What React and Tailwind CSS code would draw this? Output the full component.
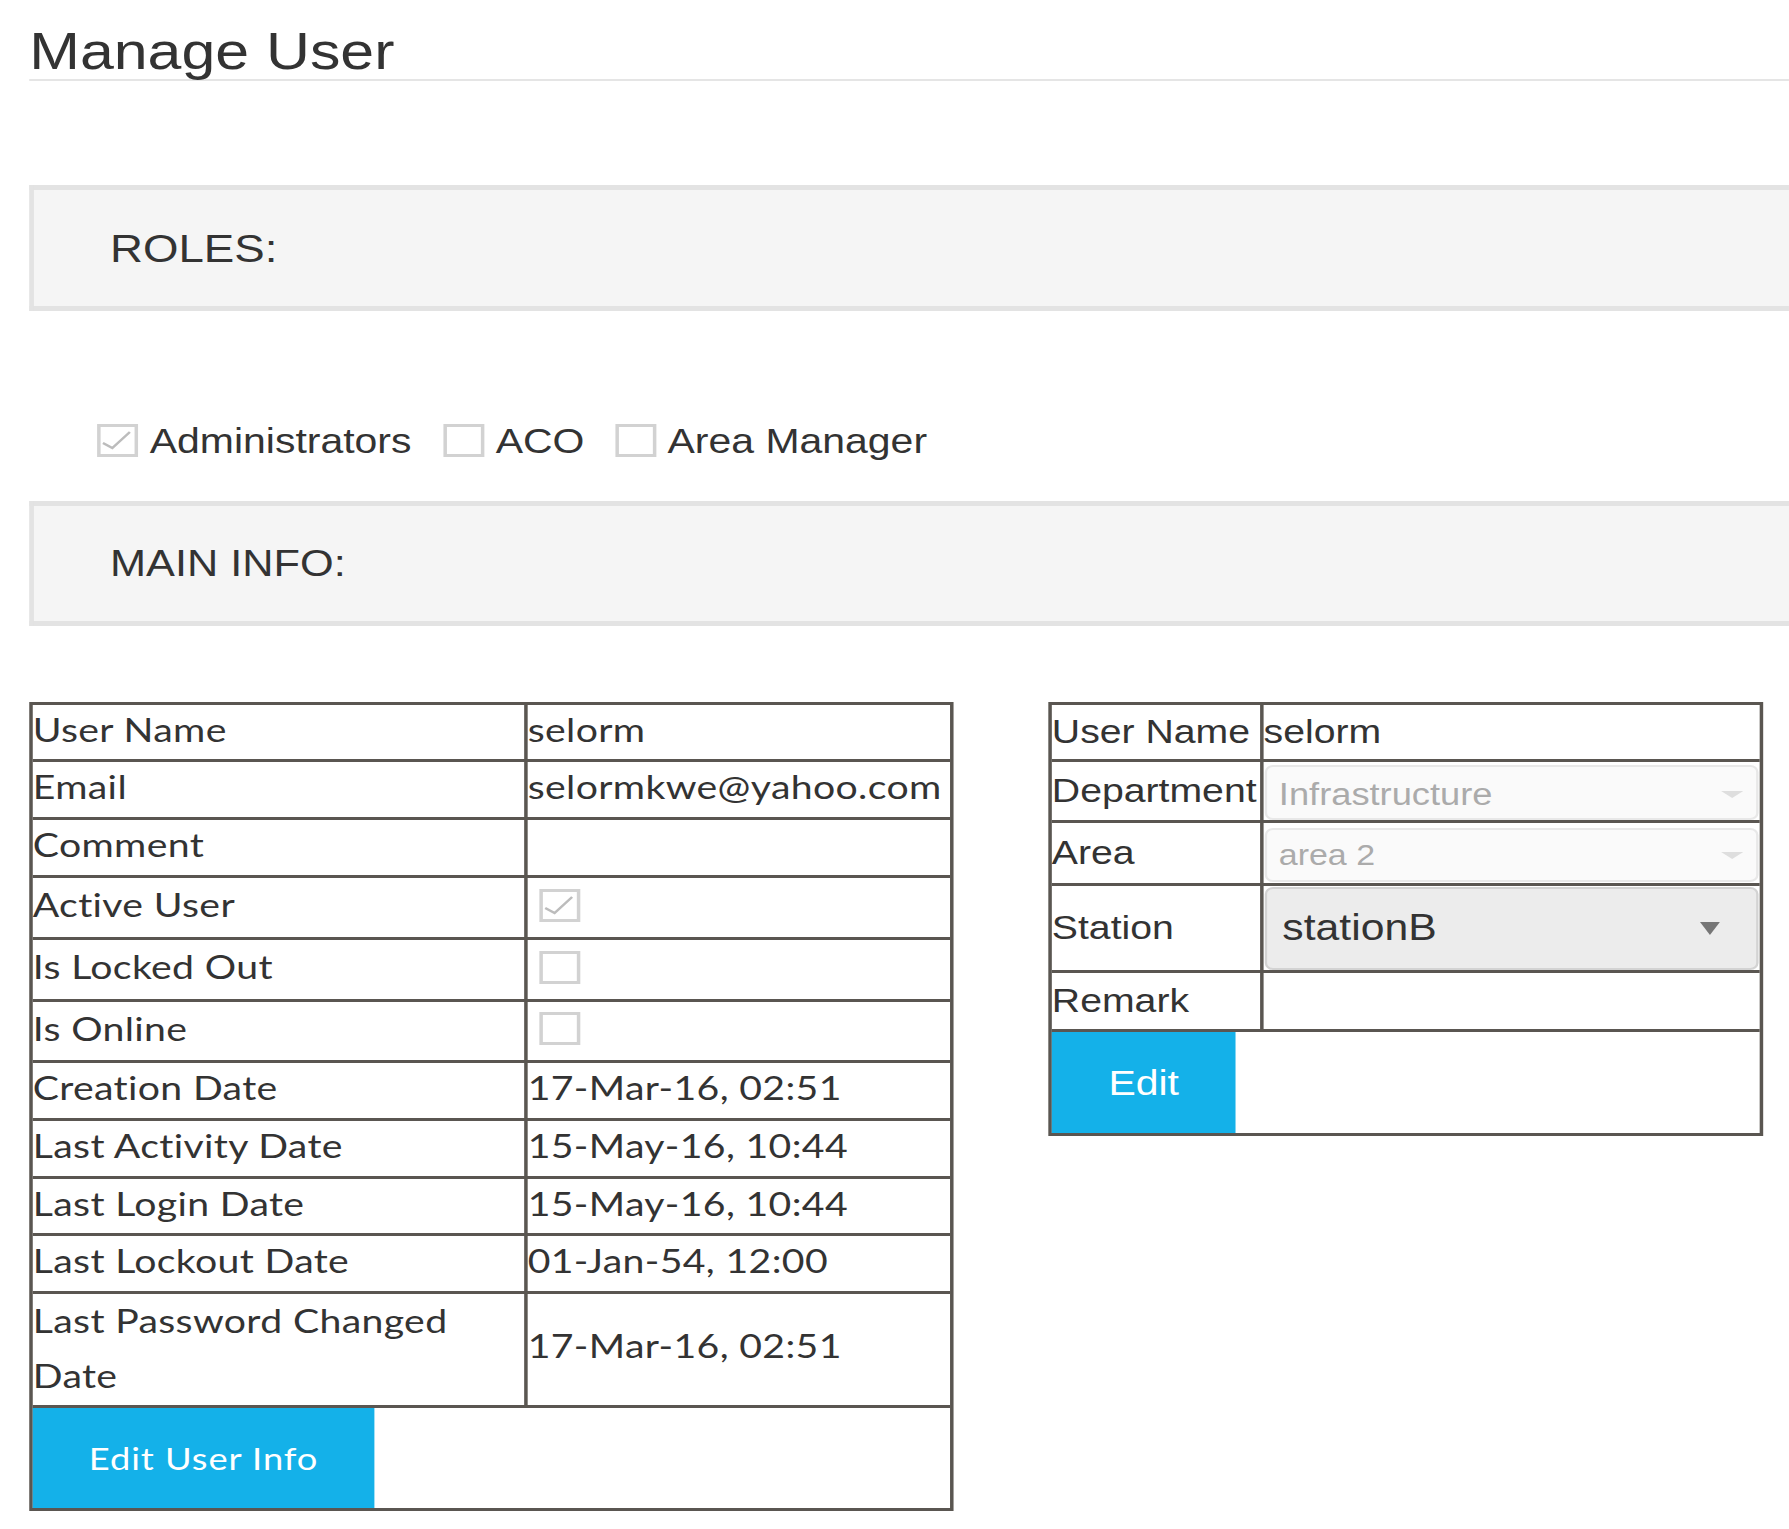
import React from "react";

function Box({ checked, className = "" }) {
  return (
    <span
      className={
        "flex-none w-[35px] h-[33px] border-[3px] border-[#d2d2d2] bg-white flex " +
        className
      }
    >
      {checked && (
        <svg viewBox="0 0 29 27" className="w-full h-full">
          <polyline
            points="2,16 10,21 25,5"
            fill="none"
            stroke="#bcbcbc"
            strokeWidth="2.2"
          />
        </svg>
      )}
    </span>
  );
}

const leftRows = [
  { l: "User Name", v: "selorm", h: "h-[57px]" },
  { l: "Email", v: "selormkwe@yahoo.com", h: "h-[58px]" },
  { l: "Comment", v: "", h: "h-[58px]" },
  { l: "Active User", cb: true, checked: true, h: "h-[62px]" },
  { l: "Is Locked Out", cb: true, h: "h-[62px]" },
  { l: "Is Online", cb: true, h: "h-[61px]" },
  { l: "Creation Date", v: "17-Mar-16, 02:51", h: "h-[58px]" },
  { l: "Last Activity Date", v: "15-May-16, 10:44", h: "h-[58px]" },
  { l: "Last Login Date", v: "15-May-16, 10:44", h: "h-[57px]" },
  { l: "Last Lockout Date", v: "01-Jan-54, 12:00", h: "h-[58px]" },
];

function Arrow({ dark }) {
  return dark ? (
    <svg viewBox="0 0 19 13" className="w-[19px] h-[13px] flex-none">
      <polygon points="1,0 18,0 9.5,13" fill="#767676" />
    </svg>
  ) : (
    <svg viewBox="0 0 19 7" className="w-[19px] h-[7px] flex-none">
      <polygon points="0,0 19,0 9.5,7" fill="#dedede" />
    </svg>
  );
}

export default function App() {
  return (
    <div className="w-[1789px] h-[1529px] overflow-hidden bg-white text-[#333]">
      <div className="w-[1529px] origin-top-left scale-x-[1.17] pl-[25px] pt-[25px] font-['Liberation_Sans',Arial,sans-serif]">
        <h1 className="text-[52px] leading-[52px] font-normal pb-[2px] border-b-2 border-[#e5e5e5]">
          Manage User
        </h1>

        <div className="mt-[104px] h-[126px] bg-[#f5f5f5] border-y-[5px] border-l-[4px] border-r-0 border-[#e3e3e3] flex items-center pl-[65px] text-[39px] leading-none">
          ROLES:
        </div>

        <div className="mt-[113px] h-[33px] flex items-center pl-[58px] text-[35px] leading-none whitespace-nowrap">
          <Box checked />
          <span className="ml-[10px]">Administrators</span>
          <Box className="ml-[27px]" />
          <span className="ml-[10px]">ACO</span>
          <Box className="ml-[26px]" />
          <span className="ml-[10px]">Area Manager</span>
        </div>

        <div className="mt-[44px] h-[125px] bg-[#f5f5f5] border-y-[5px] border-l-[4px] border-r-0 border-[#e3e3e3] flex items-center pl-[65px] text-[37px] leading-none">
          MAIN INFO:
        </div>

        <div className="mt-[76px] flex items-start gap-[81px]">
          {/* Left table */}
          <div className="w-[790px] flex-none border-[3px] border-[#5a5651] font-['Lato',sans-serif] text-[33.5px] tracking-[0.3px] leading-none">
            {leftRows.map((r) => (
              <div
                key={r.l}
                className={"flex border-b-[3px] border-[#5a5651] " + r.h}
              >
                <div className="w-[423px] flex-none border-r-[3px] border-[#5a5651] flex items-center pb-[5px] whitespace-nowrap">
                  {r.l}
                </div>
                <div className="flex-1 flex items-center pb-[5px] whitespace-nowrap">
                  {r.cb ? <Box checked={r.checked} className="ml-[10px]" /> : r.v}
                </div>
              </div>
            ))}
            <div className="flex h-[114px] border-b-[3px] border-[#5a5651]">
              <div className="w-[423px] flex-none border-r-[3px] border-[#5a5651] flex items-center pb-[3px] leading-[55px]">
                <span>
                  Last Password Changed
                  <br />
                  Date
                </span>
              </div>
              <div className="flex-1 flex items-center pb-[8px] whitespace-nowrap">
                17-Mar-16, 02:51
              </div>
            </div>
            <div className="flex h-[100px]">
              <button className="w-[292px] h-full bg-[#14b1e9] text-white text-[31px] tracking-[0.8px] leading-none flex items-center justify-center">
                Edit User Info
              </button>
            </div>
          </div>

          {/* Right table */}
          <div className="w-[611px] flex-none border-[3px] border-[#5a5651] text-[33.5px] leading-none">
            <div className="flex h-[57px] border-b-[3px] border-[#5a5651]">
              <div className="w-[181px] flex-none border-r-[3px] border-[#5a5651] flex items-center whitespace-nowrap">
                User Name
              </div>
              <div className="flex-1 flex items-center">selorm</div>
            </div>
            <div className="flex h-[61px] border-b-[3px] border-[#5a5651]">
              <div className="w-[181px] flex-none border-r-[3px] border-[#5a5651] flex items-center whitespace-nowrap">
                Department
              </div>
              <div className="flex-1 px-[1px]">
                <div className="mt-[3px] h-[55px] rounded-[7px] border-2 border-[#e8e8e8] bg-[#fafafa] flex items-center pl-[10px] pr-[11px] pt-[4px] text-[31px] text-[#ababab]">
                  <span className="flex-1">Infrastructure</span>
                  <Arrow />
                </div>
              </div>
            </div>
            <div className="flex h-[63px] border-b-[3px] border-[#5a5651]">
              <div className="w-[181px] flex-none border-r-[3px] border-[#5a5651] flex items-center">
                Area
              </div>
              <div className="flex-1 px-[1px]">
                <div className="mt-[5px] h-[54px] rounded-[7px] border-2 border-[#e8e8e8] bg-[#fafafa] flex items-center pl-[10px] pr-[11px] text-[29px] text-[#ababab]">
                  <span className="flex-1">area 2</span>
                  <Arrow />
                </div>
              </div>
            </div>
            <div className="flex h-[87px] border-b-[3px] border-[#5a5651]">
              <div className="w-[181px] flex-none border-r-[3px] border-[#5a5651] flex items-center">
                Station
              </div>
              <div className="flex-1 px-[1px]">
                <div className="mt-[1px] h-[83px] rounded-[7px] border-2 border-[#d3d3d3] bg-[#ececec] flex items-center pl-[13px] pr-[30px] text-[36.5px] text-[#333]">
                  <span className="flex-1">stationB</span>
                  <Arrow dark />
                </div>
              </div>
            </div>
            <div className="flex h-[59px] border-b-[3px] border-[#5a5651]">
              <div className="w-[181px] flex-none border-r-[3px] border-[#5a5651] flex items-center">
                Remark
              </div>
              <div className="flex-1" />
            </div>
            <div className="flex h-[101px]">
              <button className="w-[157px] h-full bg-[#14b1e9] text-white text-[35px] leading-none flex items-center justify-center">
                Edit
              </button>
            </div>
          </div>
        </div>
      </div>
    </div>
  );
}
